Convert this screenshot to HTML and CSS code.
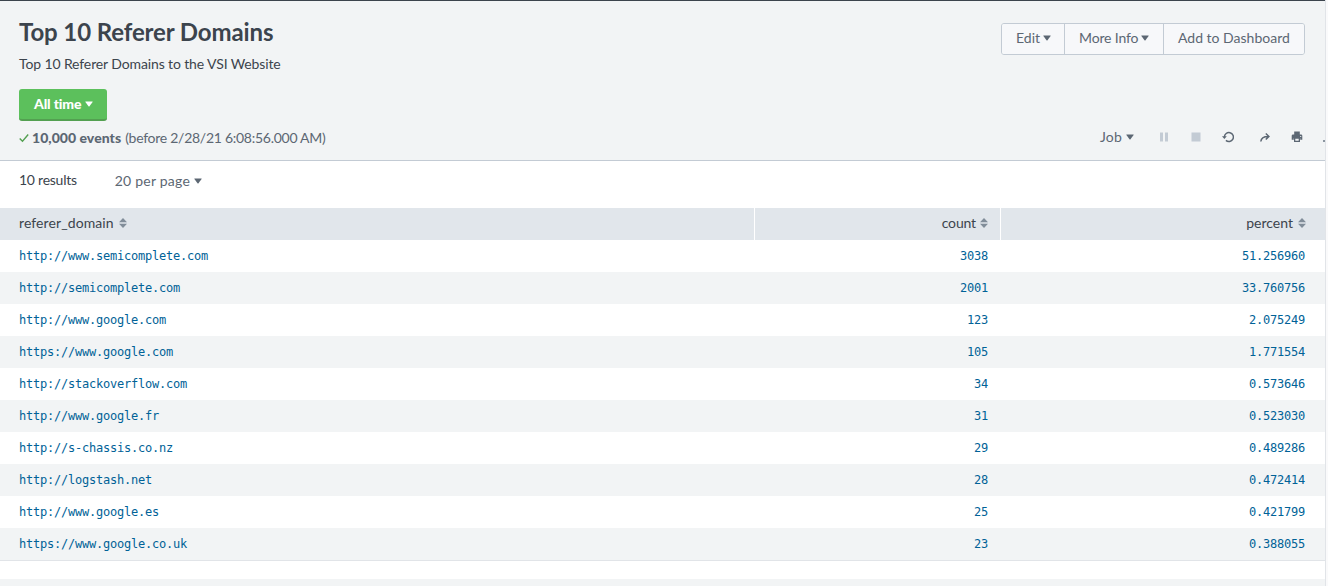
FILE: index.html
```html
<!DOCTYPE html>
<html lang="en">
<head>
<meta charset="utf-8">
<title>Top 10 Referer Domains</title>
<link rel="stylesheet" href="styles.css">
</head>
<body>
<svg class="defs" width="0" height="0">
  <symbol id="caret" viewBox="0 0 8 6"><path d="M.7 .5H7.3Q8 .5 7.6 1.1L4.5 5.2Q4 5.7 3.5 5.2L.4 1.1Q0 .5 .7 .5Z" fill="currentColor"/></symbol>
  <symbol id="sort" viewBox="0 0 8 10"><path d="M4 0L8 4.3H0ZM4 10L0 5.7H8Z" fill="currentColor"/></symbol>
</svg>
<main class="page">
  <header class="report">
    <div class="top">
      <div>
        <h1>Top 10 Referer Domains</h1>
        <p class="description">Top 10 Referer Domains to the VSI Website</p>
      </div>
      <div class="button-group">
        <button class="edit"><span>Edit</span><svg class="caret"><use href="#caret"/></svg></button>
        <button class="more"><span>More Info</span><svg class="caret"><use href="#caret"/></svg></button>
        <button class="add"><span>Add to Dashboard</span></button>
      </div>
    </div>
    <button class="time-range"><span>All time</span><svg class="caret"><use href="#caret"/></svg></button>
    <div class="status">
      <svg class="check" viewBox="0 0 10 10"><path d="M.7 5.4L3.5 8.2L9.2 1.5" fill="none" stroke="currentColor" stroke-width="1.4"/></svg>
      <strong>10,000 events</strong><span class="before">(before 2/28/21 6:08:56.000 AM)</span>
      <div class="job-bar">
        <span class="job">Job</span><svg class="caret"><use href="#caret"/></svg>
        <svg class="icon muted pause" viewBox="0 0 12 12"><path d="M2 1.5h3v9H2zM7 1.5h3v9H7z" fill="currentColor"/></svg>
        <svg class="icon muted" viewBox="0 0 12 12"><path d="M1.5 1.5h9v9h-9z" fill="currentColor"/></svg>
        <svg class="icon" viewBox="0 0 12 12"><path d="M2.4 6A4.5 4.5 0 1 1 3.9 9.4" fill="none" stroke="currentColor" stroke-width="1.5"/><path d="M0 5.2H4.8L2.4 8.1Z" fill="currentColor"/></svg>
        <svg class="icon share" viewBox="0 0 12 12"><path d="M1.8 10.5C2.1 7 4.3 5.4 9.3 5.4M6.8 2.5L9.9 5.4L6.8 8.5" fill="none" stroke="currentColor" stroke-width="1.5"/></svg>
        <svg class="icon print" viewBox="0 0 12 12"><path d="M3.2 .5h5.6v3H3.2zM2 3.5h8q1.3 0 1.3 1.3v4H9.2V7H2.8v1.8H.7v-4q0-1.3 1.3-1.3zM3 7h6v4H3z" fill="currentColor"/><path d="M4.3 7.7h3.4v2H4.3zM9.2 5h1v1h-1z" fill="#f2f4f5"/></svg>
        <i class="clipped"></i>
      </div>
    </div>
  </header>
  <div class="pager"><span class="results">10 results</span><span class="per-page">20 per page</span><svg class="caret"><use href="#caret"/></svg></div>
  <table>
    <thead><tr>
      <th class="domain"><span>referer_domain</span><svg class="sort"><use href="#sort"/></svg></th>
      <th class="count"><span>count</span><svg class="sort"><use href="#sort"/></svg></th>
      <th class="percent"><span>percent</span><svg class="sort"><use href="#sort"/></svg></th>
    </tr></thead>
    <tbody>
      <tr><td>http://www.semicomplete.com</td><td>3038</td><td>51.256960</td></tr>
      <tr><td>http://semicomplete.com</td><td>2001</td><td>33.760756</td></tr>
      <tr><td>http://www.google.com</td><td>123</td><td>2.075249</td></tr>
      <tr><td>https://www.google.com</td><td>105</td><td>1.771554</td></tr>
      <tr><td>http://stackoverflow.com</td><td>34</td><td>0.573646</td></tr>
      <tr><td>http://www.google.fr</td><td>31</td><td>0.523030</td></tr>
      <tr><td>http://s-chassis.co.nz</td><td>29</td><td>0.489286</td></tr>
      <tr><td>http://logstash.net</td><td>28</td><td>0.472414</td></tr>
      <tr><td>http://www.google.es</td><td>25</td><td>0.421799</td></tr>
      <tr><td>https://www.google.co.uk</td><td>23</td><td>0.388055</td></tr>
    </tbody>
  </table>
  <div class="footer"></div>
</main>
</body>
</html>
```
FILE: styles.css
```css
* { box-sizing: border-box; }
body { margin: 0; height: 586px; overflow: hidden; background: #fafafb; font: 14px/20px Lato, "Liberation Sans", sans-serif; color: #3c444d; }
.defs { position: absolute; }
svg { display: block; flex: none; }
button { font: inherit; margin: 0; display: flex; align-items: center; }
.page { width: 1326px; height: 586px; background: #fff; border-right: 1px solid #e1e4e8; display: flex; flex-direction: column; }
.report { height: 161px; background: #f2f4f5; border-top: 1px solid #3c444d; border-bottom: 1px solid #c3cbd4; padding: 0 20px 0 19px; }
.top { height: 88px; display: flex; justify-content: space-between; }
h1 { margin: 17px 0 0; font-size: 24px; line-height: 28px; font-weight: 700; letter-spacing: -.11px; white-space: nowrap; }
.description { margin: 8px 0 0; letter-spacing: -.12px; }
.caret { width: 8px; height: 6px; margin-left: 3px; }
.button-group { display: flex; height: 32px; margin-top: 22px; border: 1px solid #c3cbd4; border-radius: 3px; overflow: hidden; color: #5c6773; }
.button-group button { background: #f7f8fa; color: inherit; border: 0; padding: 0 0 2px 14px; }
.button-group button + button { border-left: 1px solid #c3cbd4; }
.edit { width: 62px; }
.more { width: 99px; letter-spacing: -.15px; }
.add { width: 141px; }
.time-range { width: 88px; height: 32px; border: 0; border-bottom: 2px solid #53a051; border-radius: 3px; background: #5cc05c; color: #fff; font-weight: 900; letter-spacing: -.15px; padding: 0 0 0 15px; }
.time-range .caret { margin-left: 4px; }
.status { height: 38px; display: flex; align-items: center; color: #5c6773; padding-bottom: 4px; }
.status strong { margin-left: 3px; font-weight: 900; letter-spacing: .04px; }
.before { margin-left: 4px; letter-spacing: -.27px; }
.check { width: 10px; height: 10px; color: #53a051; }
.job-bar { display: flex; align-items: center; margin: 0 -20px 2px auto; }
.job-bar .caret { margin-left: 4px; }
.job { letter-spacing: .2px; }
.icon { width: 12px; height: 12px; margin-left: 20px; }
.job-bar .pause { margin-left: 24px; }
.share { margin-left: 25px; }
.muted { color: #c3cbd4; }
.clipped { width: 2px; height: 2px; margin: 7px 0 0 20px; background: #8b95a0; }
.pager { height: 47px; padding: 0 0 7px 19px; display: flex; align-items: center; }
.results { letter-spacing: -.25px; padding-bottom: 2px; }
.per-page { margin-left: 38px; color: #5c6773; letter-spacing: .22px; }
.pager .caret { color: #5c6773; margin-left: 4px; }
table { width: 1325px; table-layout: fixed; border-collapse: separate; border-spacing: 0; border-bottom: 1px solid #e1e4e8; }
th { height: 32px; padding: 0 0 2px; background: #e1e6eb; font-weight: 400; text-align: right; white-space: nowrap; }
th + th { border-left: 1px solid #fff; }
.domain { width: 754px; text-align: left; padding-left: 19px; letter-spacing: .1px; }
.count { width: 246px; padding-right: 12px; }
.count span { letter-spacing: -.15px; }
.percent { padding-right: 19px; }
.sort { display: inline-block; width: 8px; height: 10px; color: #818d99; margin-left: 5px; }
.count .sort { margin-left: 4px; }
td { height: 32px; padding: 0 0 0 19px; font: 12px/20px "DejaVu Sans Mono", monospace; letter-spacing: -.224px; color: #006297; }
td + td { text-align: right; padding-right: 12px; }
td:last-child { padding-right: 20px; }
tbody tr:nth-child(even) { background: #f2f4f5; }
.footer { height: 7px; margin-top: auto; background: #f2f4f5; }
```
